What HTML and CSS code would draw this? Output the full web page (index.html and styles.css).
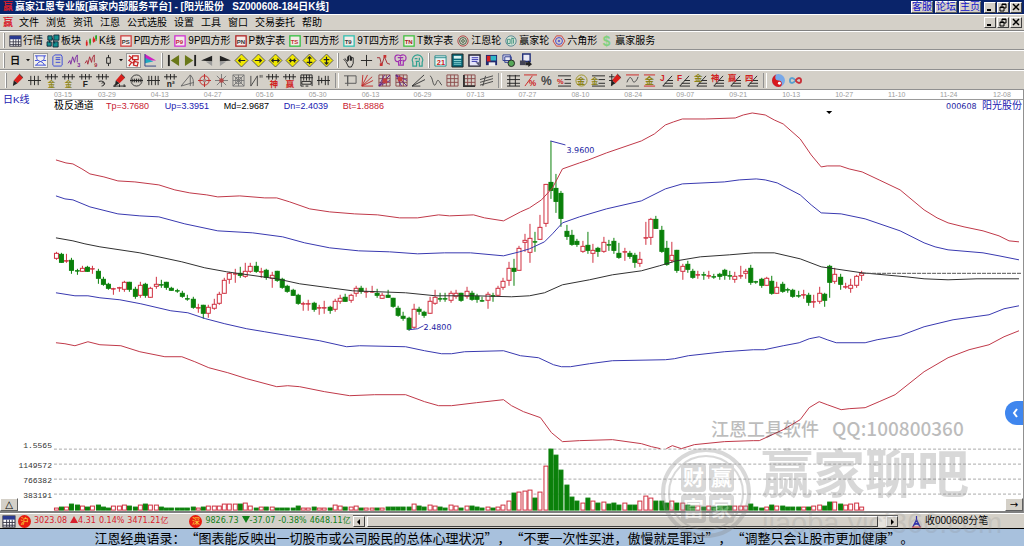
FILE: index.html
```html
<!DOCTYPE html>
<html lang="zh-CN">
<head>
    <meta charset="UTF-8">
    <meta name="viewport" content="width=device-width, initial-scale=1.0">
    <title>赢家江恩专业版</title>
    <link rel="stylesheet" href="styles.css">
</head>
<body>
    <header class="titlebar">
        <span class="brand">赢</span>
        <h1>赢家江恩专业版[赢家内部服务平台] - [阳光股份&nbsp;&nbsp; SZ000608-184日K线]</h1>
        <nav class="links">
            <a href="#">客服</a>
            <a href="#">论坛</a>
            <a href="#">主页</a>
        </nav>
        <div class="winbuttons"></div>
    </header>

    <div class="menubar">
        <span class="brand">赢</span>
        <nav class="menu">
            <a href="#">文件</a>
            <a href="#">浏览</a>
            <a href="#">资讯</a>
            <a href="#">江恩</a>
            <a href="#">公式选股</a>
            <a href="#">设置</a>
            <a href="#">工具</a>
            <a href="#">窗口</a>
            <a href="#">交易委托</a>
            <a href="#">帮助</a>
        </nav>
        <div class="winbuttons"></div>
    </div>

    <div class="toolbar labels" id="mainTools"></div>
    <div class="toolbar" id="viewTools"></div>
    <div class="toolbar drawing" id="drawTools"></div>

    <main class="chart">
        <svg id="chart" viewBox="0 90 1024 421"></svg>
        <button class="corner left" aria-label="展开">△</button>
        <button class="corner right" aria-label="右移">→</button>
        <button class="drawer" aria-label="侧栏">
            <svg viewBox="0 0 8 12"><path d="M6 2L3 6l3 4" fill="none" stroke="#fff" stroke-width="2"/></svg>
        </button>
    </main>

    <footer class="status">
        <div class="quotes">
            <svg class="icon" viewBox="0 0 14 14" id="statusTable"></svg>
            <span class="badge">沪</span>
            <span class="up">3023.08</span>
            <span class="up"><i class="tri"></i>4.31</span>
            <span class="up">0.14%</span>
            <span class="up">3471.21亿</span>
            <span class="badge second">深</span>
            <span class="down">9826.73</span>
            <span class="down"><i class="tri"></i>-37.07</span>
            <span class="down">-0.38%</span>
            <span class="down">4648.11亿</span>
        </div>
        <div class="scroll">
            <button aria-label="向左"><svg viewBox="0 0 6 6"><path d="M4 0v6L1 3z"/></svg></button>
            <div class="thumb"></div>
            <button aria-label="向右"><svg viewBox="0 0 6 6"><path d="M2 0v6l3-3z"/></svg></button>
        </div>
        <div class="feed">
            <svg class="icon" viewBox="0 0 14 14"><path d="M7 1v4M7 5L3 13M7 5l4 8M5 9h4M4 11l5-3M10 11L5 8" fill="none" stroke="#33a" stroke-width="1.3"/><path d="M2 13h10" stroke="#c33"/></svg>
            <span>收000608分笔</span>
        </div>
    </footer>

    <div class="ticker">江恩经典语录：“图表能反映出一切股市或公司股民的总体心理状况”，“不要一次性买进，傲慢就是罪过”，“调整只会让股市更加健康”。</div>

    <svg class="watermark" viewBox="0 0 360 132" aria-hidden="true">
        <g fill="none" stroke="#888">
            <circle cx="46" cy="77" r="43" stroke-width="4"/>
            <circle cx="46" cy="77" r="37" stroke-width="2"/>
        </g>
        <g fill="#888">
            <rect x="21" y="47" width="25" height="29" rx="4"/>
            <rect x="49" y="47" width="25" height="29" rx="4"/>
            <rect x="21" y="78" width="25" height="29" rx="4"/>
            <rect x="49" y="78" width="25" height="29" rx="4"/>
        </g>
        <g class="seal">
            <text x="23" y="69">财</text>
            <text x="51" y="69">赢</text>
            <text x="23" y="100">富</text>
            <text x="51" y="100">家</text>
        </g>
        <text class="contact" x="51" y="20">江恩工具软件</text>
        <text class="contact qq" x="172" y="20">QQ:100800360</text>
        <text class="name" x="101" y="77">赢家聊吧</text>
        <text class="site" x="102" y="117">jiaoba.yjcf360.com</text>
    </svg>

    <script src="script.js"></script>
</body>
</html>
```
FILE: styles.css
```css
* {
    box-sizing: border-box;
}
body {
    margin: 0;
    min-height: 100vh;
    display: flex;
    flex-direction: column;
    position: relative;
    overflow-x: hidden;
    background: #fff;
    color: #000;
    font-family: "Liberation Sans", "Noto Sans CJK SC", sans-serif;
    font-size: 10px;
    line-height: 12px;
}
a {
    color: inherit;
    text-decoration: none;
}
button {
    padding: 0;
    border: 0;
    background: none;
    color: inherit;
    font: inherit;
    white-space: nowrap;
}
svg {
    display: block;
}

/* title and menu */
.titlebar, .menubar {
    display: flex;
    align-items: center;
    padding: 0 2px 0 3px;
}
.titlebar {
    height: 14px;
    background: #0a246a;
    color: #fff;
}
.titlebar h1 {
    flex: 1;
    margin: 0;
    font-size: 10px;
    font-weight: bold;
    white-space: nowrap;
}
.brand {
    width: 12px;
    color: #d8202c;
    font-weight: bold;
}
.menubar {
    height: 17px;
    background: #d4d0c8;
    border-top: 1px solid #fff;
    border-bottom: 1px solid #808080;
}
.menubar .brand {
    width: 16px;
}
.menu {
    display: flex;
    flex: 1;
    gap: 7px;
}
.links {
    display: flex;
    gap: 2px;
    margin-right: 3px;
}
.links a {
    height: 12px;
    background: #d4d0c8;
    color: #1010c8;
    border: 1px solid #fff;
    border-right-color: #606060;
    border-bottom-color: #606060;
    line-height: 10px;
}
.winbuttons {
    display: flex;
    gap: 1px;
}
.winbuttons button {
    width: 12px;
    height: 11px;
    background: #d4d0c8;
    border: 1px solid #fff;
    border-right-color: #404040;
    border-bottom-color: #404040;
}
.winbuttons svg {
    width: 10px;
    height: 9px;
}

/* toolbars */
.toolbar {
    display: flex;
    align-items: center;
    gap: 4px;
    height: 20px;
    padding-left: 3px;
    background: #d4d0c8;
    border-top: 1px solid #fff;
    border-bottom: 1px solid #909090;
}
.toolbar button {
    display: flex;
    align-items: center;
    gap: 2px;
}
.toolbar.labels {
    height: 19px;
}
.toolbar.labels .icon {
    width: 12px;
    height: 12px;
}
.icon {
    width: 13px;
    height: 13px;
    flex: none;
    overflow: visible;
}
.grip, .sep {
    width: 2px;
    height: 15px;
    border-left: 1px solid #fff;
    border-right: 1px solid #909090;
}
.drawing {
    padding-left: 5px;
}
.drawing .sep {
    width: 4px;
    margin: 0 1px;
    border-left-color: #909090;
    border-right-color: #fff;
}
.toolbar .drop {
    width: 4px;
}
.pressed {
    background: #f4f2ee;
    outline: 1px solid #9a9a9a;
}

/* chart */
.chart {
    flex: 1;
    position: relative;
    border-right: 1px solid #909090;
    border-bottom: 2px solid #808080;
}
#chart {
    width: 100%;
}
#chart text {
    white-space: pre;
}
.dates {
    font-size: 7px;
    fill: #9c9c9c;
}
.legend {
    font-size: 9px;
}
.cjk {
    font-size: 10px;
}
.scale {
    font-family: "Liberation Mono", monospace;
    font-size: 8px;
    fill: #333;
    text-anchor: end;
}
.price {
    font-family: "DejaVu Sans", sans-serif;
    font-size: 8px;
    fill: #1818a0;
}
.corner {
    position: absolute;
    bottom: 0;
    width: 18px;
    height: 13px;
    background: #d4d0c8;
    border: 1px solid #fff;
    border-right-color: #606060;
    border-bottom-color: #606060;
    font-family: "DejaVu Sans", sans-serif;
    line-height: 10px;
}
.corner.left {
    left: 0;
}
.corner.right {
    right: 0;
}
.drawer {
    position: absolute;
    right: 0;
    top: 311px;
    width: 18px;
    height: 24px;
    padding-left: 6px;
    border-radius: 12px 0 0 12px;
    background: #3f86ee;
}
.drawer svg {
    width: 8px;
    height: 12px;
}

/* status bar */
.status {
    display: flex;
    align-items: center;
    height: 15px;
    background: #d4d0c8;
    border-top: 1px solid #fff;
    font-family: "DejaVu Sans", "Noto Sans CJK SC", sans-serif;
    font-size: 8px;
}
.quotes {
    display: flex;
    align-items: center;
    gap: 3px;
    width: 353px;
    padding-left: 2px;
    overflow: hidden;
    white-space: nowrap;
}
.badge {
    flex: none;
    width: 13px;
    height: 13px;
    border-radius: 50%;
    background: #e81c10;
    color: #ffe040;
    text-align: center;
    line-height: 13px;
}
.badge.second {
    margin-left: 18px;
}
.quotes span {
    flex: none;
}
.up {
    color: #d8202c;
}
.down {
    color: #108018;
}
.tri {
    display: inline-block;
    border: 4px solid transparent;
    border-top-width: 0;
    border-bottom: 7px solid #d8202c;
}
.down .tri {
    border-top: 7px solid #108018;
    border-bottom-width: 0;
}
.scroll {
    display: flex;
    flex: 1;
    gap: 2px;
    height: 12px;
    background: #e6e3dd;
    border-top: 1px solid #606060;
}
.scroll button, .thumb {
    background: #d4d0c8;
    border: 1px solid #fff;
    border-right-color: #404040;
    border-bottom-color: #404040;
}
.scroll button {
    width: 12px;
    padding-left: 2px;
}
.scroll button svg {
    width: 6px;
    height: 6px;
}
.thumb {
    flex: 1;
    margin-right: 6px;
}
.feed {
    display: flex;
    align-items: center;
    gap: 2px;
    width: 126px;
    padding-left: 12px;
    font-family: "Liberation Sans", "Noto Sans CJK SC", sans-serif;
    font-size: 10px;
}

.ticker {
    height: 20px;
    padding-right: 16px;
    background: #a8c1dd;
    border-top: 1px solid #000;
    border-bottom: 2px solid #fff;
    font-family: "Noto Sans CJK SC", sans-serif;
    font-size: 13px;
    text-spacing-trim: space-all;
    line-height: 17px;
    text-align: center;
    white-space: nowrap;
    overflow: hidden;
}

.watermark {
    position: absolute;
    right: 4px;
    bottom: 0;
    width: 360px;
    height: 132px;
    overflow: visible;
    opacity: 0.32;
    pointer-events: none;
    font-family: "Noto Sans CJK SC", sans-serif;
    fill: #888;
}
.seal {
    fill: #fff;
    font-size: 21px;
    font-weight: bold;
}
.contact {
    font-size: 18px;
    font-weight: 500;
    fill: #333;
}
.contact.qq {
    font-size: 19px;
}
.name {
    font-size: 52px;
    font-weight: bold;
}
.site {
    font-family: "Liberation Sans", sans-serif;
    font-size: 29px;
    fill-opacity: 0.6;
}
```
FILE: script.js
```js
// ---------- icons (14 x 14) ----------
function line(d, color, w) {
    return '<path d="' + d + '" fill="none" stroke="' + (color || '#222') + '" stroke-width="' + (w || 1) + '"/>';
}
function fill(d, color) {
    return '<path d="' + d + '" fill="' + color + '"/>';
}
function word(t, x, y, size, color) {
    return '<text x="' + x + '" y="' + y + '" font-size="' + size + '" font-weight="bold" fill="' + color + '">' + t + '</text>';
}
function boxed(t, frame, color) {
    return '<rect x="1" y="1" width="12" height="12" fill="#f4ece8" stroke="' + frame + '" stroke-width="1.5"/>' + word(t, 2, 10, 7, color);
}
function diamond(d) {
    return '<path d="M7 0l7 7-7 7-7-7z" fill="#f0e800" stroke="#555"/>' + line(d, '#222', 1.3);
}
// comb of ticks with something hung below it
function comb(below) {
    return line('M0 3h14M3 0v6M7 0v6M11 0v6') + below;
}
function fan(t, color) {
    return line('M3 13L13 2M3 13h11M5 10h9M8 7h6') + word(t, 0, 8, 9, color);
}
function rows(t, color) {
    return line('M0 2h14M7 6h7M7 10h7M0 13h14') + word(t, -1, 11, 8, color);
}

var pencil = fill('M9 0l4 4-6 6-4-3z', '#d8201c') + fill('M3 7l4 3-5 3z', '#222') + line('M9 0l4 4', '#333');
var grid = line('M1 1h12v12H1zM5 1v12M9 1v12M1 5h12M1 9h12', '#8a4a4a');

var icons = {
    table: '<rect x="1" y="1" width="13" height="12" fill="#fff" stroke="#223"/>' + fill('M1 1h13v4H1z', '#2a3a90') + line('M1 8h13M1 11h13M5 5v8M8 5v8M11 5v8', '#334'),
    boards: fill('M1 1h5v5H1zM8 0h6v6H8zM0 8h5v5H0zM7 8h6v6H7z', '#129090') + line('M1 1h5v5H1zM8 0h6v6H8zM0 8h5v5H0zM7 8h6v6H7zM6 3l3 7M3 6v3', '#123'),
    candles: line('M2 6v7M10 2v7', '#c22') + line('M6 4v8M13 0v7', '#282') + fill('M1 8h2v4H1zM9 4h3v4H9z', '#d22') + fill('M5 5h2v5H5zM12 1h2v4h-2z', '#2a2'),
    ps: boxed('PS', '#d04040', '#333'),
    p9: boxed('P9', '#d030d0', '#c02040'),
    pn: boxed('PN', '#b02020', '#333'),
    ts: boxed('TS', '#30c040', '#c03030'),
    t9: boxed('T9', '#30c0b0', '#333'),
    tn: boxed('TN', '#40c040', '#a02020'),
    wheel: '<circle cx="7" cy="7" r="6" fill="none" stroke="#a33"/><circle cx="7" cy="7" r="4" fill="none" stroke="#353"/><circle cx="7" cy="7" r="1.6" fill="none" stroke="#353"/>',
    wheel2: '<circle cx="7" cy="7" r="6" fill="#d8e8d8" stroke="#478"/>' + line('M3 5h3v5H3zM8 3v8M10 5v5M8 4h3', '#387'),
    hex: line('M4 1h6l4 6-4 6H4L0 7z', '#c33') + '<circle cx="7" cy="7" r="4" fill="none" stroke="#33c"/><circle cx="7" cy="7" r="1.5" fill="#66c"/>',
    dollar: word('$', 2, 13, 16, '#7fd080'),

    day: word('日', 1, 11, 11, '#111'),
    drop: fill('M0 5h5L2.5 8z', '#111'),
    track: line('M1 2h12M1 12h12M3 2v3M11 2v3M3 12c0-4 8-4 8-7M11 12c0-4-8-4-8-7M1 7h3M10 7h3', '#3848d8'),
    sheet: line('M4 1h7l1 2v9l-1 1H3l-1-1V3zM5 4h5M5 6h5M5 9h5', '#3848d8'),
    wave3: line('M0 10l2-3 1 4 2-8 2 6 1-5 2-3v8', '#7a28a0') + word('3', 10, 14, 6, '#7a28a0'),
    wave9: line('M0 10l2-3 1 4 2-8 2 6 1-5 2-3v8', '#a82838') + word('9', 10, 14, 6, '#a82838'),
    candle: line('M7 1v3M7 10v3M5 4h4v6H5z'),
    seal: line('M2 2l3 2-3 3 3 2-3 4M6 2h6v4H6zM9 6l-3 4M8 8l4 1-1 4-4-1z', '#c82020', 1.3),
    flag: fill('M1 0l12 7H1z', '#d020c0') + fill('M1 4l9 4-9 2z', '#20a8c0') + line('M1 0v13M1 13h12', '#304080'),
    first: fill('M13 1v12L4 7z', '#6a7818') + line('M2 1v12', '#222', 2),
    last: fill('M1 1v12l9-6z', '#6a7818') + line('M12 1v12', '#222', 2),
    prev: fill('M12 2v6L0 7z', '#222') + fill('M12 8v5L5 8z', '#999'),
    next: fill('M2 2v6l12-1z', '#222') + fill('M2 8v5l7-5z', '#999'),
    dLeft: diamond('M4 7h7M6 5L4 7l2 2'),
    dRight: diamond('M3 7h7M8 5l2 2-2 2'),
    dWide: diamond('M3 7h8M5 5L3 7l2 2M9 5l2 2-2 2'),
    dNarrow: diamond('M3 7h8M4 5l2 2-2 2M10 5L8 7l2 2'),
    dUp: diamond('M7 3v8M5 5l2-2 2 2M4 9h6'),
    dDown: diamond('M7 3v8M5 9l2 2 2-2M4 6h6'),
    hand: line('M3 8l-2-2 1-1 3 3V3h1v4-5h2v5-4h1v4-3h2v6l-2 4H6z'),
    cross: line('M7 1v12M1 7h12'),
    zigzag: line('M0 4h3l2 8 3-9 3 7 3 1', '#a02830') + fill('M3 10h3v3H3zM7 1h3v3H7z', '#c83030'),
    brainP: line('M1 4c0-4 5-3 6-2 2-2 6-1 6 2s-2 4-3 3v5H5V8C2 9 1 7 1 4zM4 4h6M7 4v7M5 7h4', '#a030b0', 1.3),
    brainT: line('M2 9C0 5 3 1 7 1s7 4 5 8v4H9V9M2 9v4h4V8M4 5h3M9 4v3M5 8h4', '#30a090', 1.3),
    calendar: fill('M1 2h12v11H1z', '#e8f4f4') + line('M1 2h12v11H1zM1 4h12', '#288') + word('21', 3, 12, 8, '#d02020'),
    calc: fill('M1 0h12v14H1z', '#086878') + fill('M3 2h8v3H3z', '#d8f0f0') + line('M3 7h8M3 9h8M3 11h8', '#90d8d8') + line('M1 0h12v14H1z'),
    note: fill('M2 1h11v12H2z', '#e4e4fa') + line('M1 1h12v12H1z', '#223', 1.5) + line('M4 4h7M4 6h7M4 8h6', '#33a') + fill('M8 9h4v4z', '#557'),
    disk: fill('M1 1h12v11H1z', '#222a70') + fill('M2 2h4v6H2z', '#d82020') + fill('M6 2h6v5H6z', '#30b8c8') + fill('M4 9h7v4H4z', '#eee'),
    screens: fill('M1 1h8v6H1z', '#e8e8f4') + line('M1 1h8v6H1zM3 3h7v6H3z', '#2a3a90') + '<circle cx="10" cy="10" r="3.5" fill="#58a858" stroke="#222"/>',
    export: fill('M4 0h8v8H4z', '#e8e8f4') + line('M4 0h8v8H4z', '#22307a', 1.5) + fill('M1 7h6v5H1z', '#445') + fill('M7 9h3V7l4 4-4 3v-2H7z', '#222'),

    pencil: pencil,
    comb: line('M0 7h14M3 2v10M7 2v10M11 2v10'),
    combGold: comb(word('金', 3, 14, 8, '#90881c')),
    combGold2: comb(word('金', 3, 14, 8, '#90881c')),
    combF: comb(word('F', 4, 14, 9, '#222')),
    combS: comb(line('M3 8c6-2 9 4 3 5M6 10c3-2 4 1 2 1')),
    pencil2: pencil + line('M0 13h14M2 11v3M7 11v3M12 11v3'),
    ruler: '<circle cx="7" cy="7" r="6" fill="none" stroke="#333"/>' + line('M0 7h14M3 5v4M5 5v4M7 5v4M9 5v4M11 5v4'),
    comb4: line('M0 7h14M2 2v10M5 2v10M9 2v10M12 2v10'),
    combN: comb(word('n²', 3, 14, 9, '#222')),
    angle: line('M0 13L10 1v12M0 13l14-4M10 1c3 3 4 6 3 12', '#666'),
    target: '<circle cx="7" cy="7" r="5" fill="none" stroke="#c02828"/>' + line('M7 0v14M0 7h14', '#c02828') + '<circle cx="7" cy="7" r="2" fill="#a88"/>',
    star: line('M7 0v14M0 7h14M2 2l10 10M12 2L2 12', '#777') + '<circle cx="7" cy="7" r="2.5" fill="#b04848"/>',
    web: line('M1 1h12v12H1zM4 4h6v6H4zM1 1l12 12M13 1L1 13M7 1v12M1 7h12', '#777'),
    quote: line('M2 2v11L9 2v11M12 1v3M14 1v3', '#444'),
    combShen: comb(word('神', 4, 14, 9, '#d02020')),
    combYing: comb(word('赢', 3, 14, 9, '#d02020')),
    film: line('M1 1h12v12M1 1v12M0 4h14M4 1v6M7 1v6M10 1v6M2 8h10v3H2zM1 13h3M6 13h3'),
    gauge: line('M0 7h14M2 2v10M5 4v6M9 2v10M12 2v10'),
    frame: line('M4 2h9v8H4zM0 2h4M4 2v11M1 10h3', '#555'),
    rays: line('M1 13L2 1M1 13L7 1M1 13l11-10M1 13l12-6M1 13h12', '#c02828'),
    rayBox: grid + line('M1 13L13 1M1 13l6-12M1 13l12-6', '#602088') + fill('M5 5h5v5H5z', '#c04040'),
    rayBox2: grid + line('M1 1l12 12M1 1l6 12M1 1l12 6', '#602088') + fill('M3 3h5v5H3z', '#c04040'),
    lines3: line('M0 13L13 1M0 13l14-7M0 13h9', '#333'),
    vee: line('M1 2c3 1 3 10 5 10s2-6 4-5 2 4 4 5', '#444'),
    grid: grid,
    grid2: grid + line('M1 1v12h12', '#333', 2),
    stripes: line('M0 6l14-4M0 9l14-4M0 12l14-4M3 13L6 2', '#444'),
    ladder: line('M3 1v12M9 1v12M0 2h14M0 6h14M0 10h14M0 13h14', '#222'),
    percentR: line('M0 1h14M1 13L9 2', '#c22') + word('%', 5, 13, 9, '#c22'),
    percent: word('%', 0, 12, 13, '#444'),
    rowsP: rows('%', '#c22'),
    coin: '<circle cx="7" cy="7" r="6" fill="none" stroke="#999020"/>' + word('金', 2, 11, 9, '#8a8218'),
    rowsG: rows('金', '#8a8218'),
    pencil3: pencil + line('M0 3h6M0 7h4M3 0v13'),
    curve: line('M0 13h14M1 9c3-8 5-5 6-2s4 2 6-4', '#444') + line('M0 1h14', '#c22'),
    gold: line('M1 1h12M1 13h12', '#c22') + word('金', 2, 11, 10, '#8a8218'),
    fanJ: fan('J', '#d02020'),
    fanF: fan('F', '#d02020'),
    fanG: fan('金', '#8a8218'),
    fanS: fan('神', '#d02020'),
    fanY: fan('赢', '#d02020'),
    fan4: fan('四', '#d02020'),
    taiji: '<circle cx="7" cy="7" r="7" fill="#78a8e8"/>' + fill('M7 0a7 7 0 0 0 0 14 3.500 3.500 0 0 0 0-7 3.500 3.500 0 0 1 0-7z', '#d8181c') + '<circle cx="8" cy="10" r="1.600" fill="#fff"/>',
    loop: line('M7 7C4 3 1 4 1 7s3 4 6 0', '#58a0d0', 2) + line('M7 7c3-4 6-3 6 0s-3 4-6 0', '#c83038', 2)
};

function svgIcon(name) {
    var narrow = name === 'drop';
    return '<svg class="icon' + (narrow ? ' drop' : '') + '" viewBox="0 0 ' + (narrow ? 5 : 14) + ' 14">' + icons[name] + '</svg>';
}

function buildToolbar(id, names, labels) {
    var html = '<span class="grip"></span>';
    names.split(' ').forEach(function (name, i) {
        if (name === '|') {
            html += '<span class="sep"></span>';
            return;
        }
        var pressed = name === 'track' || name === 'seal' ? ' class="pressed"' : '';
        html += '<button aria-label="' + (labels ? labels[i] : name) + '"' + pressed + '>' + svgIcon(name) + (labels ? labels[i] : '') + '</button>';
    });
    document.getElementById(id).innerHTML = html;
}

buildToolbar('mainTools', 'table boards candles ps p9 pn ts t9 tn wheel wheel2 hex dollar',
    ['行情', '板块', 'K线', 'P四方形', '9P四方形', 'P数字表', 'T四方形', '9T四方形', 'T数字表', '江恩轮', '赢家轮', '六角形', '赢家服务']);
buildToolbar('viewTools', 'day drop track sheet wave3 wave9 candle drop seal flag | first last prev next dLeft dRight dWide dNarrow dUp dDown | hand cross zigzag brainP brainT | calendar calc note disk screens export');
buildToolbar('drawTools', 'pencil comb combGold combGold2 combF combS pencil2 ruler comb4 combN angle target star web quote combShen combYing film gauge | frame rays rayBox rayBox2 lines3 vee grid grid2 stripes | ladder percentR percent rowsP coin rowsG pencil3 curve gold fanJ fanF fanG fanS fanY fan4 | taiji loop');

document.getElementById('statusTable').innerHTML = icons.table;

document.querySelectorAll('.winbuttons').forEach(function (box) {
    box.innerHTML =
        '<button aria-label="最小化"><svg viewBox="0 0 10 9"><path d="M2 7h4" stroke="#000" stroke-width="2"/></svg></button>' +
        '<button aria-label="还原"><svg viewBox="0 0 10 9"><path d="M4 4V1h4v4H6M2 4h4v4H2zM4 1.500h4M2 4.500h4" fill="none" stroke="#000"/></svg></button>' +
        '<button aria-label="关闭"><svg viewBox="0 0 10 9"><path d="M2 1l6 6M8 1L2 7" stroke="#000" stroke-width="1.500"/></svg></button>';
});

// ---------- chart ----------
// colour, high, body top, body bottom, low, volume
var days = [
    'r 252 253 258 259 2', 'g 253 254 262 262 3', 'r 254 260 261 262 3', 'g 258 260 270 273 6', 'g 269 270 271 274 5',
    'r 266 268 271 271 4', 'g 266 267 271 271 3', 'r 266 268 269 273 4', 'g 269 271 278 283 5', 'g 277 279 284 285 3',
    'g 283 284 288 289 2', 'r 288 288 289 294 4', 'r 287 287 288 291 4', 'r 281 282 289 291 5', 'g 282 282 289 291 4',
    'g 287 289 296 298 3', 'r 282 285 295 297 5', 'g 283 284 295 297 6', 'r 287 288 297 297 5', 'r 277 284 286 288 5',
    'g 280 284 285 287 3', 'g 282 282 287 289 2', 'g 287 288 290 290 2', 'g 289 290 291 292 2', 'g 291 293 296 297 2',
    'g 295 298 299 300 2', 'g 297 299 307 308 3', 'r 304 307 308 312 2', 'g 305 305 313 318 3', 'r 305 307 313 317 4',
    'r 299 304 308 309 4', 'r 292 294 303 304 4', 'r 278 280 293 293 6', 'r 272 273 279 283 6', 'r 269 273 274 282 6',
    'g 267 273 275 277 6', 'r 263 271 276 277 7', 'r 263 266 271 272 4', 'g 262 266 271 272 2', 'r 268 271 272 277 3',
    'g 269 270 277 279 3', 'r 272 275 278 287 3', 'g 271 271 280 281 2', 'g 278 279 287 288 2', 'g 285 286 291 292 2',
    'g 289 290 295 295 2', 'g 294 295 303 304 4', 'r 302 303 304 310 2', 'r 300 303 304 310 2', 'g 302 303 309 311 3',
    'r 305 307 308 314 2', 'r 301 307 308 313 2', 'g 306 307 310 313 2', 'r 299 301 309 311 5', 'r 295 298 301 303 4',
    'g 294 297 301 301 3', 'r 294 295 300 302 3', 'r 286 288 293 296 4', 'g 286 288 291 293 2', 'r 288 291 292 297 2',
    'r 286 291 292 292 2', 'g 289 293 295 297 2', 'r 293 295 298 298 2', 'g 290 295 297 297 3', 'g 298 298 306 307 3',
    'g 306 308 315 316 3', 'g 312 316 318 320 3', 'g 317 318 329 330 3', 'r 304 309 327 328 6', 'g 307 309 311 314 4',
    'g 311 312 315 317 3', 'r 297 301 313 313 5', 'r 290 297 303 304 4', 'g 293 298 299 301 3', 'g 293 298 299 301 2',
    'r 291 293 300 302 5', 'r 290 293 296 298 4', 'g 293 293 300 301 2', 'r 287 291 296 298 4', 'g 291 293 299 300 4',
    'g 294 296 299 302 3', 'g 297 300 301 301 2', 'r 292 294 300 308 3', 'g 293 295 296 301 2', 'r 286 288 295 296 3',
    'r 278 281 287 289 5', 'r 262 268 280 285 9', 'g 259 268 271 285 17', 'r 246 248 270 270 18', 'r 234 240 242 251 19',
    'r 224 238 252 262 20', 'g 232 241 242 251 12', 'r 215 227 239 239 18', 'r 184 184 223 226 44', 'g 141 182 190 198 61',
    'g 174 188 201 212 55', 'g 191 193 218 226 40', 'g 225 231 236 239 25', 'g 230 235 244 245 13', 'g 239 241 244 246 9',
    'r 241 246 251 252 7', 'g 232 245 250 253 12', 'r 244 250 253 262 9', 'g 247 248 251 256 7', 'r 237 242 251 252 8',
    'g 240 244 245 250 6', 'g 238 241 250 253 7', 'g 243 253 257 258 5', 'r 248 251 252 260 7', 'g 251 253 256 258 5',
    'g 253 255 262 267 5', 'r 252 259 263 266 9', 'r 222 237 238 244 14', 'r 218 219 237 244 12', 'g 216 219 228 228 9',
    'g 226 230 251 252 9', 'g 241 248 264 265 7', 'r 242 255 260 262 9', 'g 250 250 270 272 7', 'r 264 266 271 279 7',
    'g 261 264 269 272 5', 'g 269 271 277 278 4', 'r 271 274 275 278 4', 'g 272 274 275 279 3', 'r 271 275 276 278 4',
    'g 274 276 277 278 3', 'g 273 274 276 279 4', 'g 269 270 275 279 4', 'g 271 275 276 279 4', 'r 272 276 279 282 4',
    'r 266 275 276 278 4', 'r 269 271 273 278 4', 'g 265 268 282 284 6', 'g 281 281 282 283 3', 'g 278 279 285 287 2',
    'r 277 278 285 285 3', 'g 276 281 293 294 5', 'r 282 287 293 293 4', 'g 282 284 291 292 4', 'g 288 289 290 292 3',
    'g 289 290 296 297 3', 'g 291 295 296 297 3', 'r 290 294 295 298 3', 'g 293 295 302 305 3', 'r 295 301 302 307 4',
    'r 287 293 301 303 5', 'g 293 294 300 306 4', 'g 265 266 282 297 8', 'r 268 274 281 283 8', 'g 274 277 284 289 6',
    'r 283 286 287 288 5', 'r 279 285 288 292 6', 'r 275 276 285 287 7', 'r 271 273 275 280 3'
];

var bands = [
    ['#c03848', '56,160 66,163 73,164 82,169 90,174 104,177 118,181 135,182 159,185 175,190 190,193 207,195 218,197 240,196 265,198 277,198 290,202 310,209 330,212 355,214 378,215 400,218 418,218 439,215 450,216 474,215 485,218 504,221 521,212 530,208 542,200 553,188 563,169 580,163 589,160 607,153 642,141 655,134 666,125 674,122 683,119 706,119 736,118 744,115 753,113 766,115 775,120 784,124 801,139 812,155 822,167 828,166 841,166 850,169 863,172 880,180 901,190 925,210 938,218 949,223 965,227 984,231 1000,236 1010,241 1020,242'],
    ['#3838b0', '56,196 65,199 73,200 90,207 118,214 140,216 159,217 185,224 218,231 253,233 283,237 305,243 330,248 359,251 390,252 418,254 445,253 471,253 504,256 520,252 530,249 545,242 553,234 563,223 580,217 607,209 642,201 666,189 683,184 725,182 740,180 757,179 766,180 778,183 801,195 812,205 822,213 842,214 866,219 901,231 925,243 936,247 949,250 984,253 1000,256 1020,260'],
    ['#303030', '56,238 73,241 85,244 100,247 140,253 182,262 205,268 227,272 277,279 300,284 330,288 353,291 406,293 436,296 475,296 512,297 530,296 545,293 563,285 590,280 613,275 642,271 660,266 677,261 701,257 730,255 754,253 775,253 801,259 822,267 863,273 907,277 925,279 949,280 978,279 1020,279'],
    ['#3838b0', '56,293 75,296 88,296 100,298 120,300 141,304 171,311 188,313 206,319 225,324 247,329 265,332 289,336 320,341 347,347 360,346 406,347 425,351 442,354 452,354 465,352 504,351 521,356 539,358 554,365 562,367 571,367 590,364 613,361 666,360 675,359 689,356 725,352 754,350 765,350 784,346 800,343 810,339 820,337 828,340 837,343 866,343 878,340 901,336 925,327 954,320 990,315 1005,309 1020,306'],
    ['#c03848', '56,343 65,344 75,346 88,342 100,345 121,346 140,352 165,357 182,357 195,362 209,368 228,373 247,379 277,387 288,386 300,387 325,392 350,396 375,395 406,395 425,402 439,406 452,406 477,403 504,400 512,406 524,412 541,418 552,433 563,442 580,441 613,440 642,444 652,447 661,449'],
    ['#c03848', '667,449 673,446 682,449 695,445 725,442 754,441 760,441 784,430 801,420 810,408 820,402 828,405 842,410 850,409 866,408 880,402 896,395 925,372 949,358 970,350 990,345 1005,337 1020,331']
];

var dates = [[54, '03-15'], [98, '03-29'], [151, '04-13'], [204, '04-27'], [256, '05-16'], [309, '05-30'], [362, '06-13'],
    [414, '06-29'], [467, '07-13'], [519, '07-27'], [572, '08-10'], [625, '08-24'], [677, '09-07'], [730, '09-21'],
    [783, '10-13'], [836, '10-27'], [889, '11-10'], [941, '11-24'], [994, '12-08']];

var colors = { r: '#d03040', g: '#0a800a' };

function text(cls, x, y, str, color) {
    return '<text class="' + cls + '" x="' + x + '" y="' + y + '"' + (color ? ' fill="' + color + '"' : '') + '>' + str + '</text>';
}

function drawChart() {
    var out = '<path d="M54 99.500H1024" stroke="#999"/>';

    dates.forEach(function (d) {
        out += text('dates', d[0], 97, d[1]);
    });
    out += text('cjk', 3, 103, '日K线', '#2020b0');
    out += text('cjk', 54, 109, '极反通道', '#000');
    out += text('legend', 106, 109, 'Tp=3.7680', '#c82030');
    out += text('legend', 165, 109, 'Up=3.3951', '#2020b0');
    out += text('legend', 224, 109, 'Md=2.9687', '#000');
    out += text('legend', 284, 109, 'Dn=2.4039', '#2020b0');
    out += text('legend', 343, 109, 'Bt=1.8886', '#c82030');
    out += text('price', 947, 109, '000608');
    out += text('cjk', 983, 109, '阳光股份', '#2020b0');
    out += '<path d="M827 111h6l-3 3z"/>';

    // volume grid
    [[449, '1.5565', 448], [464, '1149572', 468], [479, '766382', 483], [494, '383191', 498]].forEach(function (g) {
        out += '<path d="M54 ' + g[0] + '.500H1022" stroke="#aaa" stroke-dasharray="3 2"/>';
        out += text('scale', 52, g[2], g[1]);
    });

    days.forEach(function (row, i) {
        var d = row.split(' ');
        var c = colors[d[0]];
        var x = Math.round(53.5 + i * 5.27);
        var inner = d[0] === 'r' ? '#fff' : c;
        var top = +d[2], h = Math.max(d[3] - top, 1);
        var vol = +d[5];
        out += '<path d="M' + (x + 2) + '.500 ' + d[1] + 'V' + (+d[4] + 1) + '" stroke="' + c + '"/>';
        out += '<rect x="' + x + '.500" y="' + top + '.500" width="4" height="' + h + '" fill="' + (h < 2 ? c : inner) + '" stroke="' + c + '"' + (h < 2 ? ' stroke-width="0.500"' : '') + '/>';
        out += '<rect x="' + x + '.500" y="' + (510 - vol) + '.500" width="4" height="' + vol + '" fill="' + inner + '" stroke="' + c + '"/>';
    });

    bands.forEach(function (b) {
        out += '<polyline points="' + b[1] + '" fill="none" stroke="' + b[0] + '"/>';
    });

    out += '<path d="M863 273.500H1022" stroke="#555" stroke-dasharray="4 1"/>';
    out += '<path d="M551 141l15 4M409 330l9-1 6-3" fill="none" stroke="#3838b0"/>';
    out += text('price', 567, 153, '3.9600') + text('price', 424, 330, '2.4800');

    document.getElementById('chart').innerHTML = out;
}

drawChart();
```
